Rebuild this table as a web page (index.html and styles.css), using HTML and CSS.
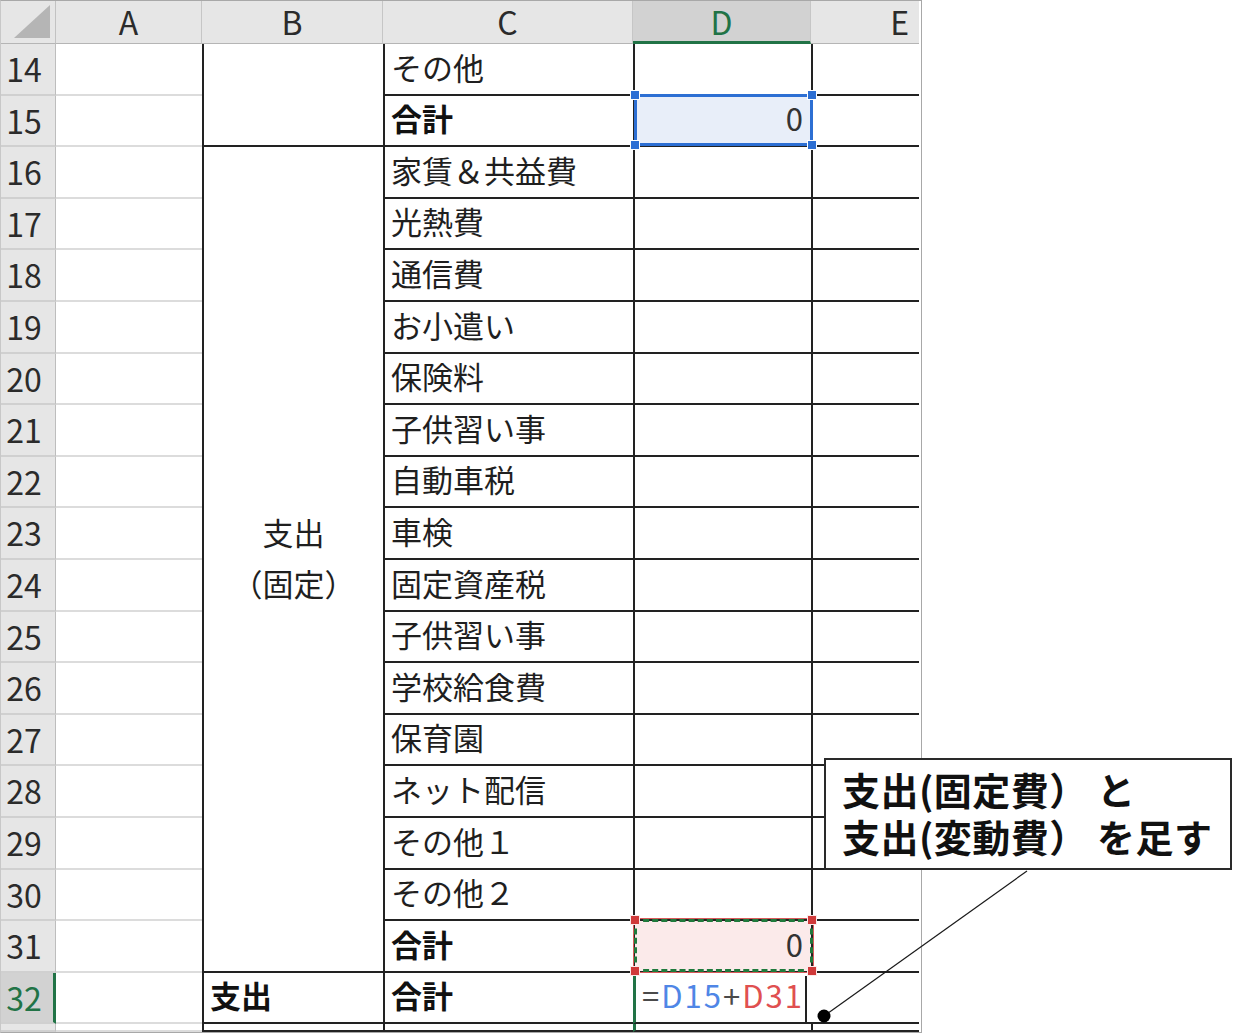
FILE: index.html
```html
<!DOCTYPE html>
<html lang="ja">
<head>
<meta charset="utf-8">
<title>Sheet</title>
<link rel="stylesheet" href="styles.css">
</head>
<body>
<div class="page">
  <div class="sheet">
    <div class="grid">
      <div class="corner"><svg width="55" height="43" viewBox="0 0 55 43"><polygon points="49,4 49,37 13,37" fill="#b5b5b5"/></svg></div>
      <div class="ch">A</div>
      <div class="ch">B</div>
      <div class="ch">C</div>
      <div class="ch ch-active">D</div>
      <div class="ch ch-last">E</div>

      <!-- 14 -->
      <div class="rh">14</div><div class="ca"></div>
      <div class="cb span2"></div>
      <div class="cc">その他</div><div class="cd"></div><div class="ce"></div>
      <!-- 15 -->
      <div class="rh">15</div><div class="ca"></div>
      <div class="cc bold">合計</div>
      <div class="cd num sel-blue">0<span class="frame-blue"><i class="hd tl"></i><i class="hd tr"></i><i class="hd bl"></i><i class="hd br"></i></span></div>
      <div class="ce"></div>
      <!-- 16 -->
      <div class="rh">16</div><div class="ca"></div>
      <div class="cb span16"><span>支出</span><span>（固定）</span></div>
      <div class="cc">家賃＆共益費</div><div class="cd"></div><div class="ce"></div>
      <div class="rh">17</div><div class="ca"></div><div class="cc">光熱費</div><div class="cd"></div><div class="ce"></div>
      <div class="rh">18</div><div class="ca"></div><div class="cc">通信費</div><div class="cd"></div><div class="ce"></div>
      <div class="rh">19</div><div class="ca"></div><div class="cc">お小遣い</div><div class="cd"></div><div class="ce"></div>
      <div class="rh">20</div><div class="ca"></div><div class="cc">保険料</div><div class="cd"></div><div class="ce"></div>
      <div class="rh">21</div><div class="ca"></div><div class="cc">子供習い事</div><div class="cd"></div><div class="ce"></div>
      <div class="rh">22</div><div class="ca"></div><div class="cc">自動車税</div><div class="cd"></div><div class="ce"></div>
      <div class="rh">23</div><div class="ca"></div><div class="cc">車検</div><div class="cd"></div><div class="ce"></div>
      <div class="rh">24</div><div class="ca"></div><div class="cc">固定資産税</div><div class="cd"></div><div class="ce"></div>
      <div class="rh">25</div><div class="ca"></div><div class="cc">子供習い事</div><div class="cd"></div><div class="ce"></div>
      <div class="rh">26</div><div class="ca"></div><div class="cc">学校給食費</div><div class="cd"></div><div class="ce"></div>
      <div class="rh">27</div><div class="ca"></div><div class="cc">保育園</div><div class="cd"></div><div class="ce"></div>
      <div class="rh">28</div><div class="ca"></div><div class="cc">ネット配信</div><div class="cd"></div><div class="ce"></div>
      <div class="rh">29</div><div class="ca"></div><div class="cc">その他１</div><div class="cd"></div><div class="ce"></div>
      <div class="rh">30</div><div class="ca"></div><div class="cc">その他２</div><div class="cd"></div><div class="ce"></div>
      <div class="rh">31</div><div class="ca"></div><div class="cc bold">合計</div>
      <div class="cd num sel-red">0<span class="frame-red"><i class="hd tl"></i><i class="hd tr"></i><i class="hd bl"></i><i class="hd br"></i></span></div>
      <div class="ce"></div>
      <!-- 32 -->
      <div class="rh rh-active">32</div><div class="ca"></div>
      <div class="cb bold left">支出</div>
      <div class="cc bold">合計</div>
      <div class="cd edit"><span class="f-op">=</span><span class="f-blue">D15</span><span class="f-op">+</span><span class="f-red">D31</span><span class="caret"></span></div>
      <div class="ce noleft"></div>
      <!-- 33 partial -->
      <div class="rh"></div><div class="ca"></div><div class="cb"></div><div class="cc"></div><div class="cd edit-tail"></div><div class="ce"></div>
    </div>
  </div>

  <div class="callout">支出(固定費） と<br>支出(変動費） を足す</div>
  <svg class="leader" width="1240" height="1034" viewBox="0 0 1240 1034">
    <line x1="1027" y1="871" x2="824" y2="1016" stroke="#1a1a1a" stroke-width="1.2"/>
    <circle cx="824" cy="1016" r="6.5" fill="#000"/>
  </svg>
</div>
</body>
</html>
```

FILE: styles.css
```css
html, body {
  margin: 0;
  padding: 0;
  background: #fff;
}
body {
  width: 1240px;
  height: 1034px;
  overflow: hidden;
  font-family: "Noto Sans CJK JP", "Noto Sans", sans-serif;
  color: #1f1f1f;
}
.page {
  position: relative;
  width: 1240px;
  height: 1034px;
}
.sheet {
  width: 920px;
  border: 1px solid #a8a8a8;
  border-left-color: #c8c8c8;
}
.grid {
  display: grid;
  grid-template-columns: 55px 146px 181px 250px 178px 108px;
  grid-template-rows: 43px 52px 51px 52px 51px 52px 52px 51px 52px 51px 52px 52px 51px 52px 51px 52px 52px 51px 52px 51px 8px;
}
.grid > div {
  box-sizing: border-box;
  min-width: 0;
  overflow: visible;
}
.corner {
  background: #e6e6e6;
  border-right: 1px solid #c2c2c2;
  border-bottom: 1px solid #b5b5b5;
}
.corner svg { display: block; }
.ch {
  background: #e6e6e6;
  border-right: 1px solid #c6c6c6;
  border-bottom: 1px solid #b5b5b5;
  display: flex;
  align-items: flex-start;
  justify-content: center;
  font-family: "Noto Sans CJK JP", sans-serif;
  font-size: 32px;
  line-height: 40px;
  color: #2b2b2b;
}
.ch-active {
  background: #d2d2d2;
  color: #217346;
  border-bottom: 3px solid #217346;
}
.ch-last { border-right: none; justify-content: flex-end; padding-right: 10px; }
.rh {
  background: #e6e6e6;
  border-right: 1px solid #bdbdbd;
  border-bottom: 2px solid #d0d0d0;
  display: flex;
  align-items: center;
  justify-content: center;
  font-size: 32px;
  line-height: 1;
  color: #2b2b2b;
  padding-right: 8px;
  padding-bottom: 2px;
}
.rh-active {
  background: #d2d2d2;
  color: #217346;
  border-right: 3px solid #217346;
  padding-right: 6px;
}
.ca {
  border-bottom: 2px solid #dcdcdc;
}
.cb, .cc, .cd, .ce {
  border-left: 2px solid #222;
  border-bottom: 2px solid #222;
  display: flex;
  align-items: center;
  font-size: 31px;
  line-height: 1;
  padding: 0 6px 6px 6px;
  white-space: nowrap;
}
.span2 { grid-row: span 2; }
.span16 {
  grid-row: span 16;
  flex-direction: column;
  justify-content: center;
  line-height: 51px;
  padding-bottom: 4px;
}
.span16 span { display: block; }
.left { padding-left: 6px; }
.bold { font-weight: 700; color: #111; }
.num {
  justify-content: flex-end;
  padding-right: 8px;
  color: #333;
}
.noleft { border-left: none; }

/* selected D15 */
.sel-blue {
  position: relative;
  background: #e8eef9;
}
.frame-blue {
  position: absolute;
  top: -2px; left: -1px; right: -2px; bottom: -1px;
  border: 3px solid #2d6fd3;
  z-index: 3;
}
.frame-blue .hd {
  position: absolute;
  width: 8px;
  height: 8px;
  background: #2d6fd3;
  border: 1px solid #fff;
}
/* copy/ref D31 */
.sel-red {
  position: relative;
  background: #fbeaea;
}
.frame-red {
  position: absolute;
  top: -2px; left: -1px; right: -2px; bottom: -1px;
  border: 3px dashed #1f7a3c;
  box-shadow: 0 0 0 1px #d95a5a;
  z-index: 3;
}
.frame-red .hd {
  position: absolute;
  width: 8px;
  height: 8px;
  background: #d03a3a;
  border: 1px solid #fbeaea;
}
.hd.tl { top: -7px; left: -7px; }
.hd.tr { top: -7px; right: -7px; }
.hd.bl { bottom: -7px; left: -7px; }
.hd.br { bottom: -7px; right: -7px; }

/* editing D32 */
.edit {
  position: relative;
  border-left: 3px solid #217346;
  padding-left: 6px;
  letter-spacing: 2px;
}
.edit-tail { border-left: 3px solid #217346; }
.f-op { color: #4a4a4a; }
.f-blue { color: #4f86e6; }
.f-red { color: #e05050; }
.caret {
  position: absolute;
  right: 4px;
  top: 3px;
  bottom: -1px;
  width: 2px;
  background: #222;
}

/* callout */
.callout {
  position: absolute;
  left: 824px;
  top: 758px;
  width: 408px;
  height: 112px;
  box-sizing: border-box;
  border: 2px solid #2a2a2a;
  background: #fff;
  padding: 5px 0 0 16px;
  font-size: 38px;
  line-height: 47px;
  letter-spacing: 0.5px;
  font-weight: 700;
  color: #111;
  white-space: nowrap;
  z-index: 5;
}
.leader {
  position: absolute;
  left: 0;
  top: 0;
  pointer-events: none;
  z-index: 6;
}
```
